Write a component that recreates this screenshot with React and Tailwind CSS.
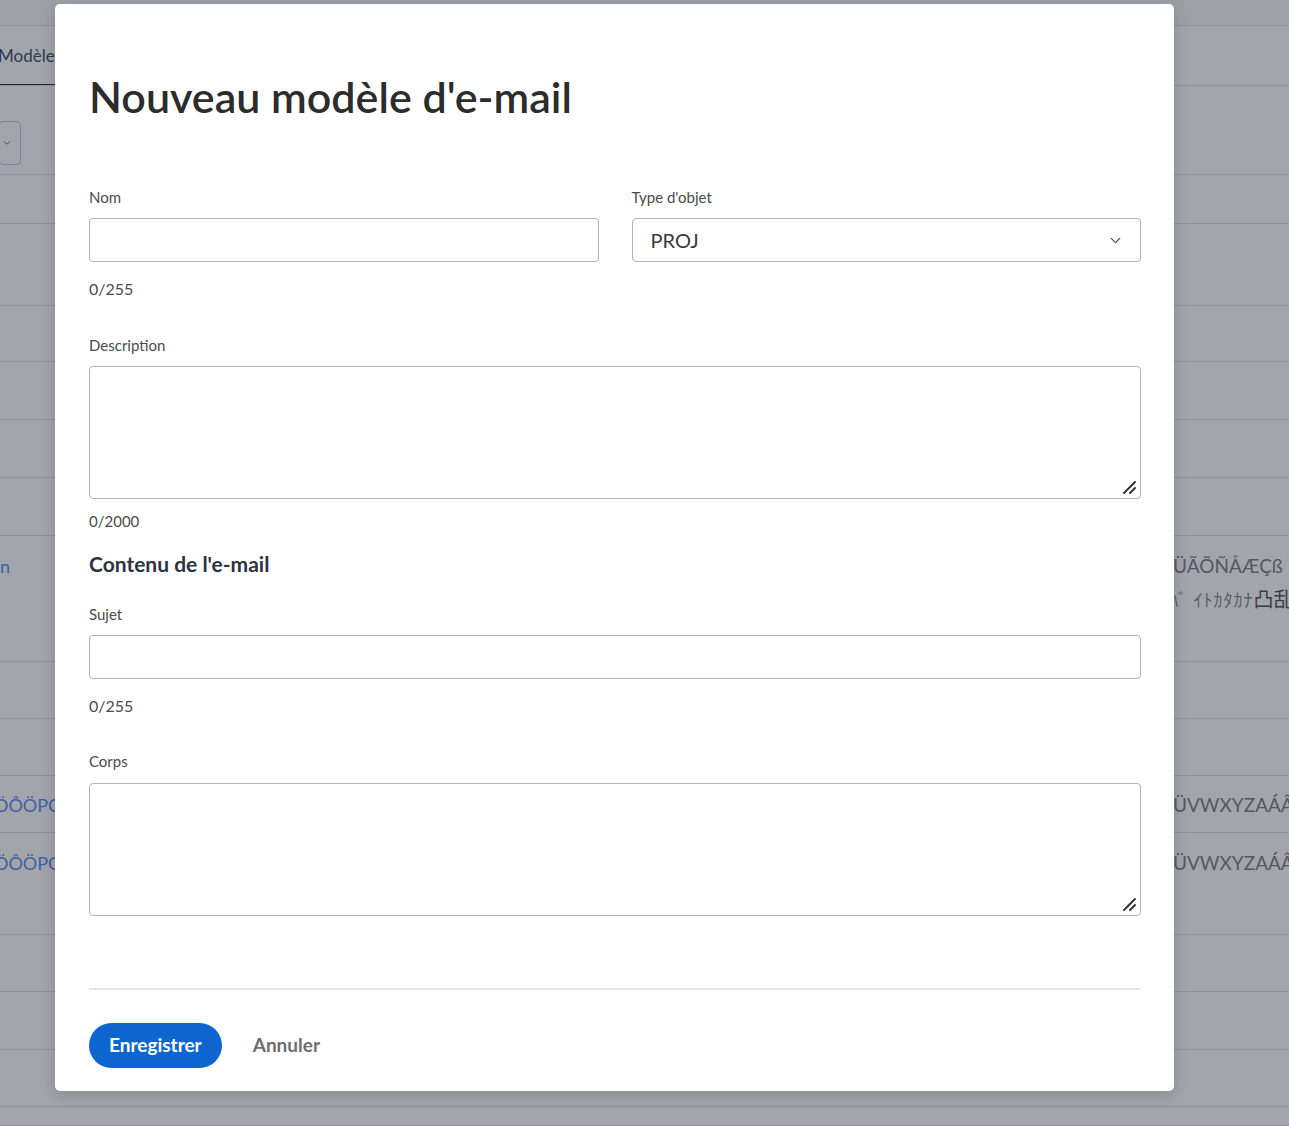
import { ChevronDown } from "lucide-react"

const font = { fontFamily: "Lato, 'Noto Sans CJK JP', sans-serif" }

const rows = [
  { h: "h-[60px]", tab: true },
  { h: "h-[89px]", toolbar: true },
  { h: "h-[49px]" },
  { h: "h-[82px]" },
  { h: "h-[56px]" },
  { h: "h-[58px]" },
  { h: "h-[58px]" },
  { h: "h-[58px]" },
  { h: "h-[126px]", left: "n", right: "ÜÃÕÑÅÆÇß", right2: true },
  { h: "h-[57px]" },
  { h: "h-[57px]" },
  { h: "h-[57px]", left: "ÖÔÖPC", right: "ÜVWXYZAÁÂ", mid: true },
  { h: "h-[102px]", left: "ÖÔÖPC", right: "ÜVWXYZAÁÂ" },
  { h: "h-[57px]" },
  { h: "h-[58px]" },
  { h: "h-[57px]" },
  { h: "h-[19px]" },
]

const ResizeGrip = () => (
  <svg className="absolute right-[3px] bottom-[3px]" width="15" height="15" viewBox="0 0 15 15">
    <path d="M2 13 L13 2" stroke="#333" strokeWidth="2" strokeLinecap="round" />
    <path d="M8 13 L13 8" stroke="#333" strokeWidth="2" strokeLinecap="round" />
  </svg>
)

const Label = ({ children }) => (
  <div className="text-[15px] leading-[20px] text-[#4b4b4b]">{children}</div>
)

const Counter = ({ children, className = "" }) => (
  <div className={`text-[16px] leading-[22px] text-[#4b4b4b] ${className}`}>{children}</div>
)

export default function App() {
  return (
    <div className="relative w-[1289px] h-[1126px] overflow-hidden bg-[#a2a5ac]" style={font}>
      {/* page behind the overlay */}
      <div className="flex flex-col">
        <div className="h-[26px] bg-[#9da0a7] border-b border-[#8f929a]" />
        {rows.map((r, i) => (
          <div key={i} className={`${r.h} grid grid-cols-[55px_1fr_119px] border-b border-[#8f929a]`}>
            <div className="relative overflow-hidden whitespace-nowrap">
              {r.tab && (
                <div className="h-full flex flex-col justify-center">
                  <div className="text-[17px] text-[#2e3a52] -ml-[2px] mt-[1px]">Modèle</div>
                  <div className="absolute left-0 right-0 bottom-[-1px] h-[2px] bg-[#1f2430]" />
                </div>
              )}
              {r.toolbar && (
                <div className="pt-[35px]">
                  <div className="w-[22px] h-[44px] -ml-[1px] border border-[#7f828a] rounded-[4px] flex items-center justify-end pr-[8px]">
                    <ChevronDown size={10} className="text-[#3a3d44]" />
                  </div>
                </div>
              )}
              {r.left && (
                <div className={`${r.mid ? "pt-[16px]" : "pt-[17px]"} text-[18px] text-[#3e5fa6] ${r.left === "n" ? "" : "-ml-[6px]"}`}>
                  {r.left}
                </div>
              )}
            </div>
            <div />
            <div className="relative overflow-hidden whitespace-nowrap">
              {r.right && (
                <div className={`${r.mid ? "pt-[15px]" : "pt-[16px]"} ml-[3px] text-[19px] text-[#55585f]`}>
                  {r.right}
                  {r.right2 && (
                    <div className="text-[18px] text-[#5a5d63] mt-[3px] -ml-[4px] tracking-[1px]">
                      ﾊﾞ ｲﾄｶﾀｶﾅ<span className="text-[20px] tracking-normal text-[#3a3d44]">凸乱</span>
                    </div>
                  )}
                </div>
              )}
            </div>
          </div>
        ))}
      </div>

      {/* modal */}
      <div className="absolute left-[55px] top-[4px] w-[1119px] h-[1087px] bg-white rounded-[5px] shadow-[0_4px_16px_rgba(0,0,0,0.18)] pl-[34px] pr-[33px] pt-[67px]">
        <h1 className="text-[43px] leading-[52px] font-semibold text-[#2c2c2c]">Nouveau modèle d'e-mail</h1>

        <div className="mt-[64px] grid grid-cols-2 gap-x-[33px]">
          <div>
            <Label>Nom</Label>
            <div className="mt-[11px] h-[44px] border border-[#b3b3b3] rounded-[4px]" />
            <Counter className="mt-[16px]">0/255</Counter>
          </div>
          <div>
            <Label>Type d'objet</Label>
            <div className="mt-[11px] h-[44px] border border-[#b3b3b3] rounded-[4px] flex items-center justify-between pl-[18px] pr-[16px]">
              <span className="text-[20px] text-[#3a3a3a]">PROJ</span>
              <ChevronDown size={17} strokeWidth={1.75} className="text-[#4b4b4b]" />
            </div>
          </div>
        </div>

        <div className="mt-[35px]">
          <Label>Description</Label>
          <div className="relative mt-[11px] h-[133px] border border-[#b3b3b3] rounded-[4px]">
            <ResizeGrip />
          </div>
          <div className="mt-[12px] text-[15px] leading-[20px] text-[#4b4b4b]">0/2000</div>
        </div>

        <h2 className="mt-[20px] text-[21px] leading-[26px] font-bold text-[#2d3340]">Contenu de l'e-mail</h2>

        <div className="mt-[27px]">
          <Label>Sujet</Label>
          <div className="mt-[11px] h-[44px] border border-[#b3b3b3] rounded-[4px]" />
          <Counter className="mt-[16px]">0/255</Counter>
        </div>

        <div className="mt-[34px]">
          <Label>Corps</Label>
          <div className="relative mt-[12px] h-[133px] border border-[#b3b3b3] rounded-[4px]">
            <ResizeGrip />
          </div>
        </div>

        <div className="mt-[72px] h-[2px] bg-[#e3e3e3]" />

        <div className="mt-[33px] flex items-center gap-[31px]">
          <button className="h-[45px] px-[20px] rounded-full bg-[#0d66d0] text-white text-[19px] font-bold">
            Enregistrer
          </button>
          <button className="text-[19px] font-bold text-[#6e6e6e]">Annuler</button>
        </div>
      </div>
    </div>
  )
}
